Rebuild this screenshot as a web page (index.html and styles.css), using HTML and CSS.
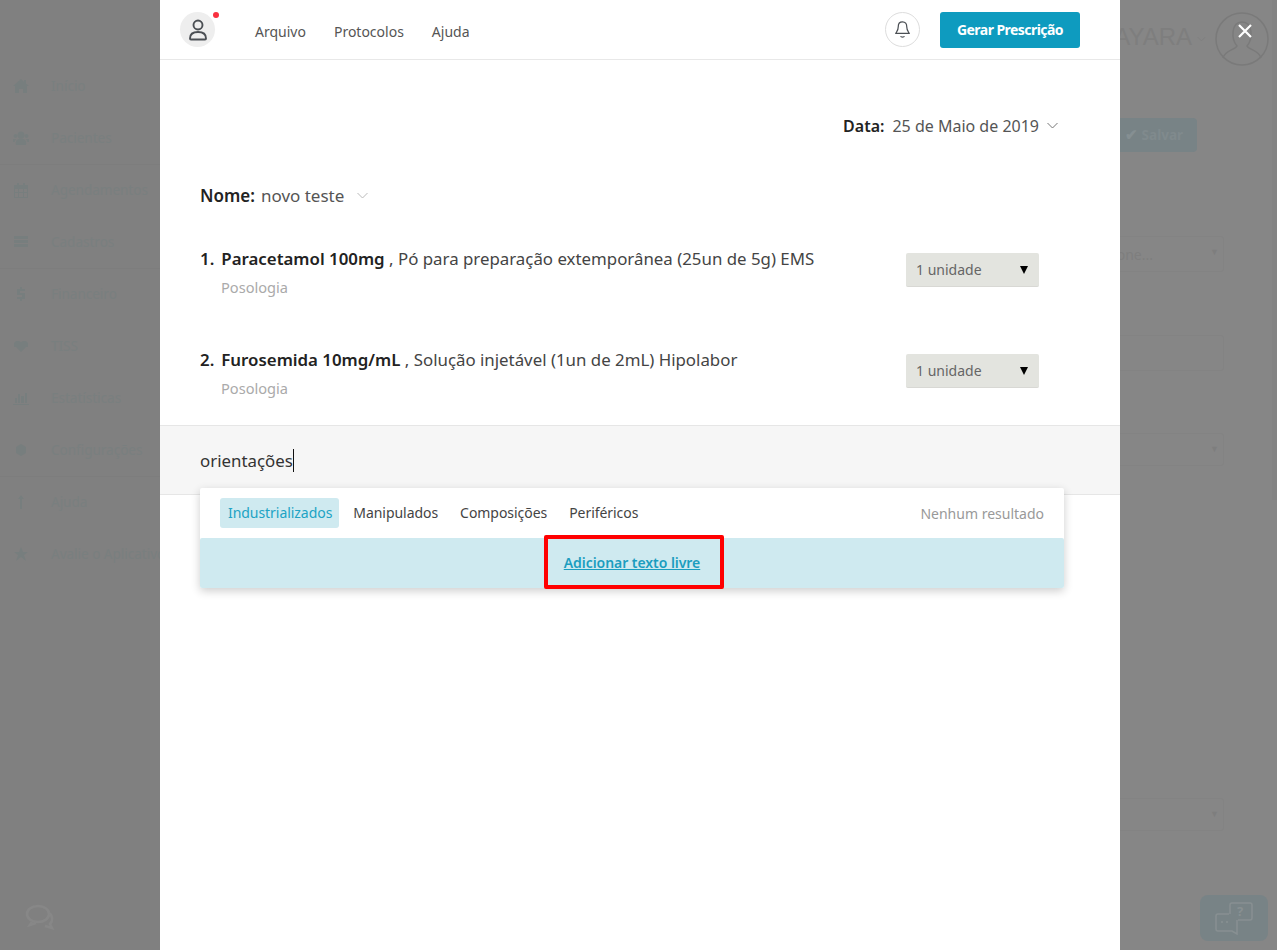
FILE: index.html
```html
<!DOCTYPE html>
<html lang="pt-BR">
<head>
    <meta charset="UTF-8">
    <meta name="viewport" content="width=device-width, initial-scale=1.0">
    <title>Prescrição</title>
    <link rel="stylesheet" href="styles.css">
</head>
<body>

    <!-- pagina de fundo, escurecida pelo overlay -->
    <div class="app">
        <nav class="sidebar">
            <a class="side-item"><svg viewBox="0 0 16 16"><path d="M8 1 0 8h2v7h4v-4h4v4h4V8h2l-3-2.600V2h-2v1.700z"/></svg>Início</a>
            <a class="side-item divided"><svg viewBox="0 0 16 16"><circle cx="8" cy="5" r="3.500"/><circle cx="2.500" cy="6" r="2"/><circle cx="13.500" cy="6" r="2"/><path d="M3 15c-1-4 1-6.500 5-6.500s6 2.500 5 6.500zM0 9h3L1.500 12H0zm16 0h-3l1.500 3H16z"/></svg>Pacientes</a>
            <a class="side-item"><svg viewBox="0 0 16 16"><path fill-rule="evenodd" d="M1 3h3V1h2v2h4V1h2v2h3v13H1zm1 4v3h3V7zm4 0v3h4V7zm5 0v3h3V7zm-9 4v4h3v-4zm4 0v4h4v-4zm5 0v4h3v-4z"/></svg>Agendamentos</a>
            <a class="side-item divided"><svg viewBox="0 0 16 16"><path d="M1 2h14v3H1zm0 4h14v3H1zm0 4h14v3H1z"/></svg>Cadastros</a>
            <a class="side-item"><svg viewBox="0 0 16 16"><path d="M7 1h2v2h3v2H7v2h5v6H9v2H7v-2H4v-2h5V9H4V3h3z"/></svg>Financeiro</a>
            <a class="side-item"><svg viewBox="0 0 16 16"><path d="M8 14 3 9H1V5l2-2h3l2 1 2-1h3l2 2v4h-2z"/></svg>TISS</a>
            <a class="side-item"><svg viewBox="0 0 16 16"><path d="M0 14h16v1H0zm2-6h2v5H2zm3-4h2v9H5zm3 2h3v7H8zm4-3h2v10h-2z"/></svg>Estatísticas</a>
            <a class="side-item divided"><svg viewBox="0 0 16 16"><path d="M8 2 13 5v6l-5 3-5-3V5z"/></svg>Configurações</a>
            <a class="side-item"><svg viewBox="0 0 16 16"><path d="M7 5h2v10H7zM8 1l3 4H5z"/></svg>Ajuda</a>
            <a class="side-item"><svg viewBox="0 0 16 16"><path d="m8 1 2 5h5l-4 3 2 6-5-4-5 4 2-6-4-3h5z"/></svg>Avalie o Aplicativo</a>
        </nav>
        <main class="behind">
            <div class="behind-user">
                <span class="behind-name">MAYARA</span>
                <svg class="behind-chevron" viewBox="0 0 12 7"><path d="M1 1l5 5 5-5"/></svg>
                <svg class="behind-avatar" viewBox="0 0 54 54"><circle cx="27" cy="27" r="26"/><path d="M8 46c2-8 12-8 14-12-6-7-6-24 5-24s11 17 5 24c2 4 12 4 14 12"/></svg>
            </div>
            <button class="behind-save"><span class="save-check">✔</span> Salvar</button>
            <div class="behind-field field-one"><span>Selecione...</span><i>▼</i></div>
            <div class="behind-field field-two"></div>
            <div class="behind-field field-three"><i>▼</i></div>
            <div class="behind-field field-four"><i>▼</i></div>
        </main>
        <div class="scroll-thumb"></div>
    </div>

    <svg class="chat-left" viewBox="0 0 30 26"><ellipse cx="13" cy="10" rx="11" ry="8"/><path d="M24 9c4 3 4 8 1 11l2 4-7-2M7 18l-2 3 6-2"/></svg>
    <div class="help-float">
        <svg viewBox="0 0 38 33">
            <path d="M15 12V3a2 2 0 0 1 2-2h18a2 2 0 0 1 2 2v13a2 2 0 0 1-2 2H23"/>
            <path d="M14 12H3a2 2 0 0 0-2 2v13a2 2 0 0 0 2 2h14l5 3V18"/>
            <text x="22" y="14" class="help-mark">?</text>
            <circle cx="7" cy="20" r="1"/><circle cx="12" cy="20" r="1"/>
        </svg>
    </div>

    <section class="modal">
        <header class="topbar">
            <div class="avatar">
                <svg viewBox="0 0 20 22"><circle cx="10" cy="6" r="4.500"/><path d="M2 19.500c0-4 3-6.500 8-6.500s8 2.500 8 6.500c0 .5-.5 1-1 1H3c-.5 0-1-.5-1-1z"/></svg>
                <span class="dot"></span>
            </div>
            <ul class="menu">
                <li>Arquivo</li>
                <li>Protocolos</li>
                <li>Ajuda</li>
            </ul>
            <div class="bell">
                <svg viewBox="0 0 18 20"><path d="M9 2C6 2 4.500 4 4.500 7c0 4-2 5.500-2.500 7h14c-.5-1.500-2.500-3-2.500-7C13.500 4 12 2 9 2zM7 17c.5 1.500 3.500 1.500 4 0"/></svg>
            </div>
            <button class="btn-gerar">Gerar Prescrição</button>
        </header>

        <div class="date-row">
            <b>Data:</b><span>25 de Maio de 2019</span>
            <svg class="chevron" viewBox="0 0 12 7"><path d="M1 1l5 5 5-5"/></svg>
        </div>

        <div class="name-row">
            <b>Nome:</b><span>novo teste</span>
            <svg class="chevron light" viewBox="0 0 12 7"><path d="M1 1l5 5 5-5"/></svg>
        </div>

        <div class="med">
            <div class="med-text">
                <p><b class="num">1.</b><b>Paracetamol 100mg</b> , Pó para preparação extemporânea (25un de 5g) EMS</p>
                <small>Posologia</small>
            </div>
            <div class="qty">1 unidade<i></i></div>
        </div>

        <div class="med">
            <div class="med-text">
                <p><b class="num">2.</b><b>Furosemida 10mg/mL</b> , Solução injetável (1un de 2mL) Hipolabor</p>
                <small>Posologia</small>
            </div>
            <div class="qty">1 unidade<i></i></div>
        </div>

        <div class="search-bar">
            <span class="search-text">orientações</span>
            <div class="results">
                <div class="tabs">
                    <span class="tab active">Industrializados</span>
                    <span class="tab">Manipulados</span>
                    <span class="tab">Composições</span>
                    <span class="tab">Periféricos</span>
                    <span class="no-result">Nenhum resultado</span>
                </div>
                <div class="free-text">
                    <a href="#">Adicionar texto livre</a>
                    <span class="highlight"></span>
                </div>
            </div>
        </div>
    </section>

    <svg class="close" viewBox="0 0 16 16"><path d="M2 2l12 12M14 2 2 14"/></svg>

</body>
</html>
```

FILE: styles.css
```css
* {
    box-sizing: border-box;
}
html, body {
    height: 100%;
}
body {
    margin: 0;
    font-family: "Noto Sans", sans-serif;
    background: #868686;
    color: #333;
    overflow: hidden;
    position: relative;
}

/* fundo */
.app {
    display: flex;
    height: 950px;
}
.sidebar {
    width: 160px;
    flex: none;
    background: #808080;
    padding-top: 61px;
    overflow: hidden;
}
.side-item {
    display: flex;
    align-items: center;
    height: 52px;
    padding: 0 0 2px 13px;
    font-size: 13.500px;
    white-space: nowrap;
    color: #797f7f;
}
.side-item.divided {
    border-bottom: 1px solid #7d7d7d;
}
.side-item svg {
    width: 16px;
    height: 16px;
    margin-right: 22px;
    fill: #777e7e;
    flex: none;
}
.behind {
    flex: 1;
    position: relative;
}
.behind-user {
    position: absolute;
    top: 12px;
    right: 8px;
    display: flex;
    align-items: center;
}
.behind-name {
    margin: -4px 5px 0 0;
    font-family: "Liberation Sans", sans-serif;
    font-size: 24px;
    color: #7e7e7e;
}
.behind-chevron {
    width: 9px;
    height: 6px;
    margin-right: 9px;
    fill: none;
    stroke: #7d7d7d;
}
.behind-avatar {
    width: 54px;
    height: 54px;
    fill: none;
    stroke: #7a7a7a;
    stroke-width: 1.500;
}
.behind-save {
    position: absolute;
    top: 118px;
    right: 80px;
    width: 150px;
    height: 34px;
    padding: 0 14px 2px 0;
    text-align: right;
    border: none;
    border-radius: 4px;
    background: #788386;
    color: #808a8d;
    font: bold 13.500px "Noto Sans", sans-serif;
}
.save-check {
    font-size: 15px;
    color: #858f92;
}
.behind-field {
    position: absolute;
    right: 53px;
    width: 300px;
    border: 1px solid #838383;
    border-radius: 3px;
    color: #7e7e7e;
    font-size: 14px;
}
.behind-field span {
    position: absolute;
    right: 70px;
    top: 8px;
}
.behind-field i {
    position: absolute;
    right: 4px;
    top: 8px;
    font-size: 9px;
    font-style: normal;
}
.field-one { top: 236px; height: 36px; }
.field-two { top: 335px; height: 36px; }
.field-three { top: 433px; height: 33px; }
.field-four { top: 798px; height: 33px; }
.scroll-thumb {
    position: absolute;
    top: 0;
    right: 0;
    width: 5px;
    height: 500px;
    background: #838383;
}
.chat-left {
    position: absolute;
    left: 25px;
    top: 904px;
    width: 30px;
    height: 26px;
    fill: none;
    stroke: #878787;
    stroke-width: 2.500;
}
.help-float {
    position: absolute;
    left: 1200px;
    top: 895px;
    width: 68px;
    height: 46px;
    border-radius: 8px;
    background: #788386;
    display: flex;
    align-items: center;
    justify-content: center;
}
.help-float svg {
    width: 38px;
    height: 33px;
    fill: none;
    stroke: #889092;
    stroke-width: 1.500;
}
.help-float circle {
    fill: #889092;
    stroke: none;
}
.help-mark {
    font: bold 13px "Noto Sans", sans-serif;
    fill: #889092;
    stroke: none;
}

/* modal */
.modal {
    position: absolute;
    top: 0;
    left: 160px;
    width: 960px;
    height: 950px;
    background: #fff;
}
.topbar {
    display: flex;
    align-items: center;
    height: 60px;
    padding: 0 40px 0 20px;
    border-bottom: 1px solid #e8e8e8;
}
.avatar {
    position: relative;
    width: 35px;
    height: 35px;
    border-radius: 50%;
    background: #eee;
    display: flex;
    align-items: center;
    justify-content: center;
}
.avatar svg {
    width: 20px;
    height: 22px;
    fill: none;
    stroke: #4b4f54;
    stroke-width: 1.900;
}
.dot {
    position: absolute;
    top: 0;
    right: -4px;
    width: 6px;
    height: 6px;
    border-radius: 50%;
    background: #f9303f;
}
.menu {
    display: flex;
    gap: 28px;
    margin: 3px 0 0 40px;
    padding: 0;
    list-style: none;
    font-size: 14px;
    color: #555;
    flex: 1;
}
.bell {
    width: 35px;
    height: 35px;
    margin-right: 20px;
    border: 1px solid #ddd;
    border-radius: 50%;
    display: flex;
    align-items: center;
    justify-content: center;
}
.bell svg {
    width: 17px;
    height: 19px;
    margin-left: -1px;
    fill: none;
    stroke: #4b4f54;
    stroke-width: 1.300;
}
.btn-gerar {
    width: 140px;
    height: 36px;
    border: none;
    border-radius: 3px;
    background: #0e9bbf;
    color: #fff;
    font: bold 14px "Noto Sans", sans-serif;
    letter-spacing: -0.550px;
}
.date-row, .name-row {
    display: flex;
    align-items: center;
    color: #555;
}
.date-row b, .name-row b {
    font-weight: 600;
    color: #222;
}
.date-row {
    justify-content: flex-end;
    padding-right: 61px;
    margin-top: 55px;
    height: 22px;
    font-size: 16px;
}
.date-row b {
    margin-right: 8px;
}
.name-row {
    padding-left: 40px;
    margin-top: 47px;
    height: 22px;
    font-size: 17px;
}
.name-row b {
    margin-right: 6px;
}
.chevron {
    width: 13px;
    height: 7px;
    margin: -2px 0 0 7px;
    fill: none;
    stroke: #777;
    stroke-width: 1;
}
.chevron.light {
    margin: 0 0 0 12px;
    stroke: #bbb;
}
.med {
    display: flex;
    justify-content: space-between;
    padding: 0 81px 0 40px;
    height: 101px;
}
.name-row + .med {
    margin-top: 41px;
}
.med-text p {
    margin: 0;
    font-size: 16.850px;
    line-height: 24px;
    color: #444;
}
.med-text b {
    font-weight: 600;
    color: #222;
}
.med-text .num {
    margin-right: 7px;
}
.med-text small {
    display: block;
    margin: 6px 0 0 21px;
    font-size: 14.600px;
    line-height: 20px;
    color: #aaa;
}
.qty {
    position: relative;
    width: 133px;
    height: 34px;
    margin-top: 6px;
    padding-left: 10px;
    border-radius: 2px;
    border-bottom: 1px solid #d8d8d4;
    background: #e3e4df;
    font-size: 14px;
    line-height: 33px;
    color: #666;
}
.qty i {
    position: absolute;
    top: 13px;
    right: 11px;
    border-style: solid;
    border-width: 8px 4.500px 0;
    border-color: #000 transparent transparent;
}

/* busca */
.search-bar {
    position: absolute;
    top: 425px;
    left: 0;
    right: 0;
    height: 70px;
    padding: 23px 40px 0;
    background: #f6f6f6;
    border-top: 1px solid #e6e6e6;
    border-bottom: 1px solid #e6e6e6;
}
.search-text {
    display: inline-block;
    height: 23px;
    border-right: 1px solid #111;
    font-size: 16.850px;
    line-height: 24px;
    color: #333;
}
.results {
    position: absolute;
    top: 62px;
    left: 40px;
    width: 864px;
    background: #fff;
    border-radius: 2px;
    box-shadow: 0 3px 10px rgba(0, 0, 0, 0.2);
}
.tabs {
    display: flex;
    align-items: center;
    height: 50px;
    padding: 0 20px;
    gap: 6px;
    font-size: 14px;
    letter-spacing: -0.050px;
    color: #444;
}
.tab {
    padding: 0 8px;
    height: 30px;
    line-height: 30px;
    border-radius: 3px;
}
.tab.active {
    padding-right: 7px;
    background: #cfeaf0;
    color: #20a3c4;
}
.no-result {
    margin-left: auto;
    letter-spacing: 0;
    color: #999;
}
.free-text {
    position: relative;
    height: 50px;
    padding-bottom: 2px;
    background: #cfeaf0;
    border-radius: 2px;
    display: flex;
    align-items: center;
    justify-content: center;
    font-size: 14px;
    font-weight: 600;
    letter-spacing: -0.050px;
}
.free-text a {
    color: #1b9dbf;
}
.highlight {
    position: absolute;
    top: -3px;
    left: 344px;
    width: 180px;
    height: 54px;
    border: 4px solid #f00;
    border-radius: 2px;
}
.close {
    position: absolute;
    top: 23px;
    left: 1237px;
    width: 16px;
    height: 16px;
    fill: none;
    stroke: #fff;
    stroke-width: 2.200;
}
```
